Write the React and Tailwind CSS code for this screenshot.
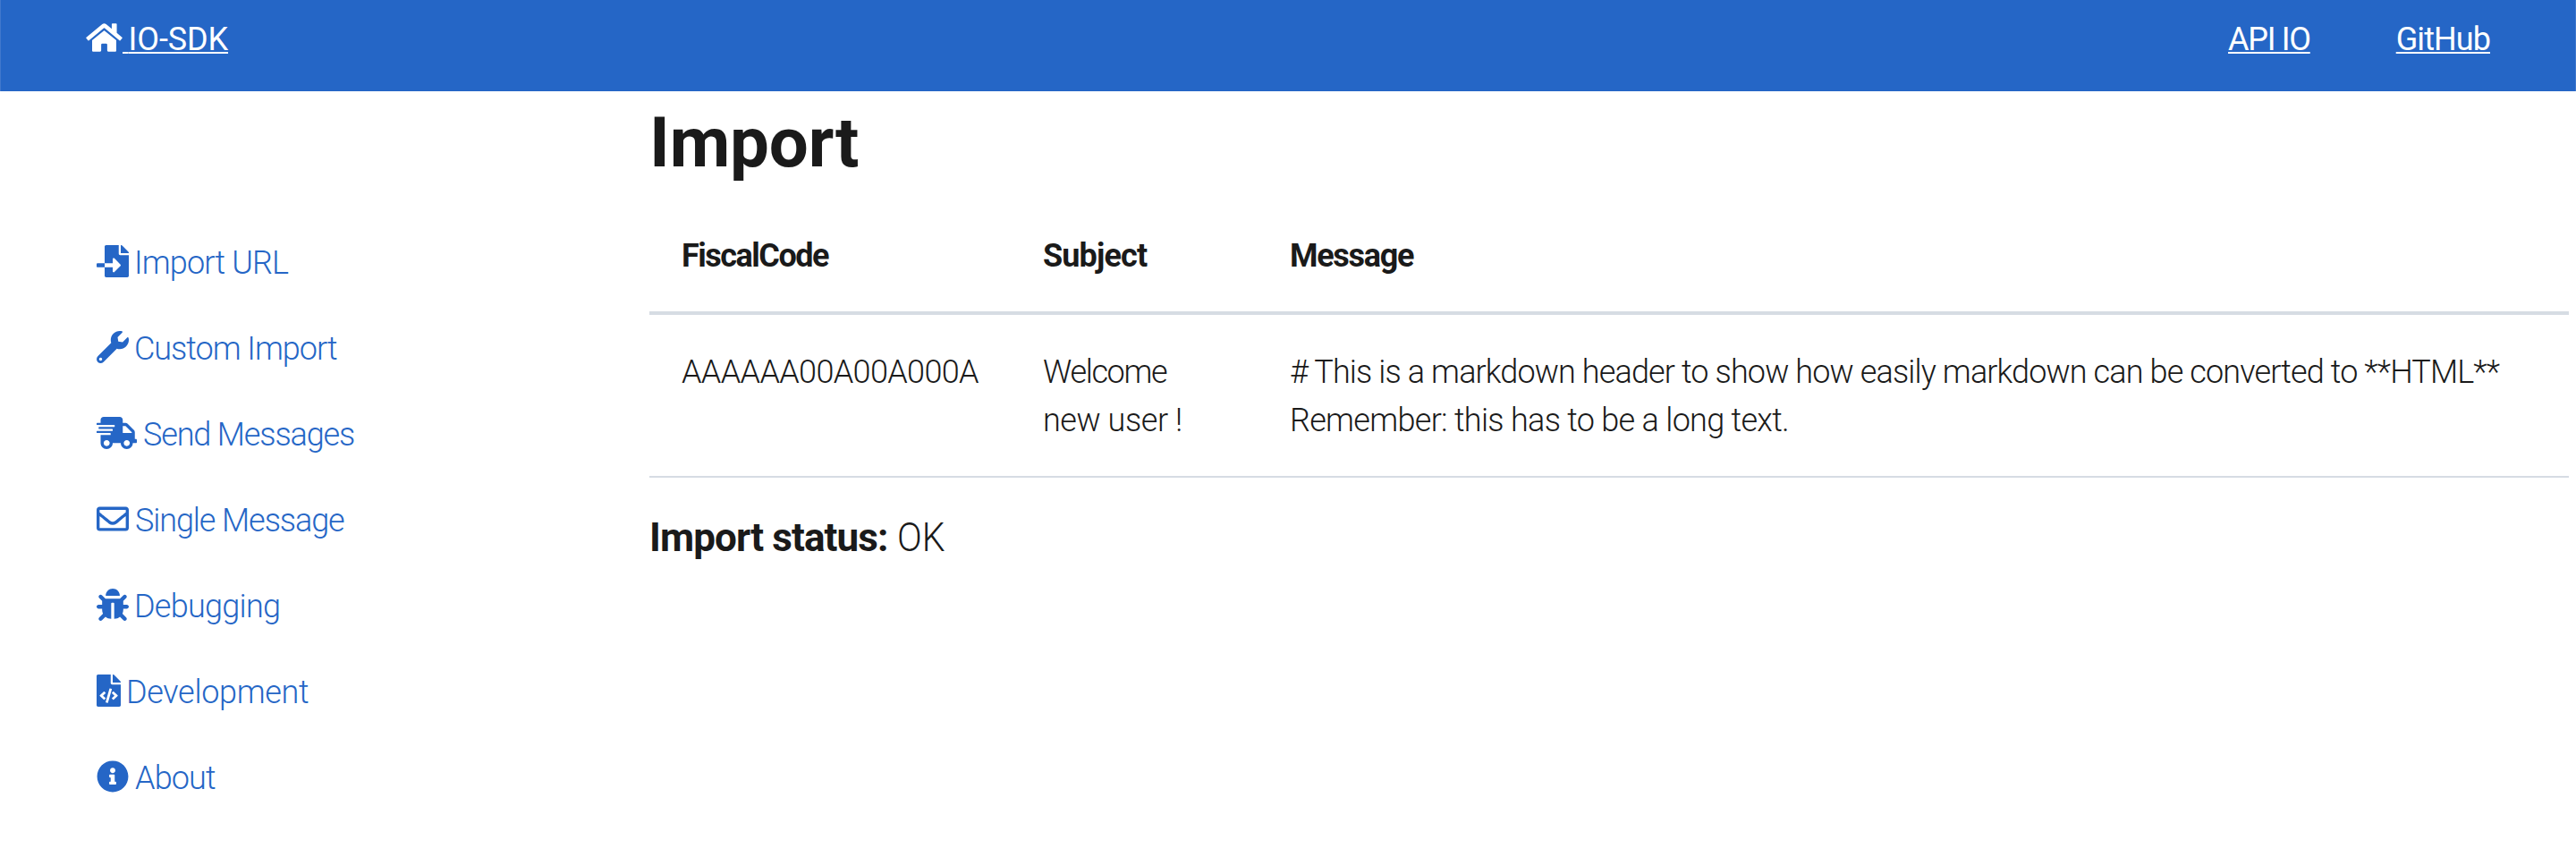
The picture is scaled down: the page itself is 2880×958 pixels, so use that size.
import {
  FaHome,
  FaFileImport,
  FaWrench,
  FaShippingFast,
  FaRegEnvelope,
  FaBug,
  FaFileCode,
  FaInfoCircle,
} from "react-icons/fa";

const menu = [
  { label: "Import URL", Icon: FaFileImport, icon: "w-9", text: "ml-[6px] tracking-[-0.84px]" },
  { label: "Custom Import", Icon: FaWrench, icon: "w-9", text: "ml-[6px] tracking-[-1.02px]" },
  { label: "Send Messages", Icon: FaShippingFast, icon: "w-[45px]", text: "ml-[7px] tracking-[-1.14px]" },
  { label: "Single Message", Icon: FaRegEnvelope, icon: "w-9", text: "ml-[7px] tracking-[-1.09px]" },
  { label: "Debugging", Icon: FaBug, icon: "w-9", text: "ml-[6px] tracking-[-0.73px]" },
  { label: "Development", Icon: FaFileCode, icon: "w-[27px]", text: "ml-[6px] tracking-[-0.32px]" },
  { label: "About", Icon: FaInfoCircle, icon: "w-9", text: "ml-[7px] tracking-[-0.86px]" },
];

function Header() {
  return (
    <header className="flex h-[102px] items-start justify-between border-x border-[#4178cd] bg-[#2566c6] pt-[17px] pr-[95px] pl-[95px] leading-[54px] text-white">
      <a href="#home" className="flex">
        <FaHome className="mt-[7px] h-9 w-[41px]" />
        <span className="whitespace-pre underline decoration-2 underline-offset-[2px]">
          <span className="tracking-[-2.4px]"> </span>
          <span className="tracking-[-0.1px]">IO-SDK</span>
        </span>
      </a>
      <nav className="flex gap-24">
        <a href="#api" className="tracking-[-1.3px] underline decoration-2 underline-offset-[2px]">
          API IO
        </a>
        <a href="#github" className="tracking-[-0.92px] underline decoration-2 underline-offset-[2px]">
          GitHub
        </a>
      </nav>
    </header>
  );
}

function Sidebar() {
  return (
    <aside className="w-[726px] shrink-0 pt-[144px] pl-[108px]">
      <ul className="font-light text-[#2566c6]">
        {menu.map(({ label, Icon, icon, text }) => (
          <li key={label} className="h-24 pt-[21px] leading-[54px]">
            <a href="#menu" className="flex">
              <Icon className={"mt-[7px] h-9 " + icon} />
              <span className={text}>{label}</span>
            </a>
          </li>
        ))}
      </ul>
    </aside>
  );
}

export default function App() {
  return (
    <div className="h-[958px] overflow-hidden bg-white font-['Roboto',sans-serif] text-[36px] text-[#1a1a1a]">
      <Header />
      <div className="flex">
        <Sidebar />
        <main className="w-[2146px] pt-[10px]">
          <h1 className="text-[78px] leading-[96px] font-bold tracking-[-0.15px]">Import</h1>
          <table className="mt-[14px] w-full table-fixed border-separate border-spacing-0 text-left leading-[54px]">
            <colgroup>
              <col className="w-[404px]" />
              <col className="w-[277px]" />
              <col />
            </colgroup>
            <thead>
              <tr className="h-[130px] align-top font-bold">
                <th className="border-b-4 border-[#d6dce3] pt-[37px] pl-9 tracking-[-1.5px]">FiscalCode</th>
                <th className="border-b-4 border-[#d6dce3] pt-[37px] pl-9 tracking-[-0.86px]">Subject</th>
                <th className="border-b-4 border-[#d6dce3] pt-[37px] pl-[35px] tracking-[-1.3px]">Message</th>
              </tr>
            </thead>
            <tbody>
              <tr className="h-[182px] align-top font-light">
                <td className="border-b-2 border-[#d6dce3] pt-[37px] pl-9 tracking-[-0.65px]">AAAAAA00A00A000A</td>
                <td className="border-b-2 border-[#d6dce3] pt-[37px] pl-9">
                  <div className="tracking-[-1.35px]">Welcome</div>
                  <div className="tracking-[-0.43px]">new user !</div>
                </td>
                <td className="border-b-2 border-[#d6dce3] pt-[37px] pl-[35px] whitespace-nowrap">
                  <div className="tracking-[-0.87px]">
                    # This is a markdown header to show how easily markdown can be converted to **HTML**
                  </div>
                  <div className="tracking-[-0.7px]">Remember: this has to be a long text.</div>
                </td>
              </tr>
            </tbody>
          </table>
          <p className="mt-[37px] flex text-[44px] leading-[60px]">
            <strong className="font-bold tracking-[-0.9px]">Import status:</strong>
            <span className="ml-[10px] origin-left scale-x-[0.93] font-light">OK</span>
          </p>
        </main>
      </div>
    </div>
  );
}
